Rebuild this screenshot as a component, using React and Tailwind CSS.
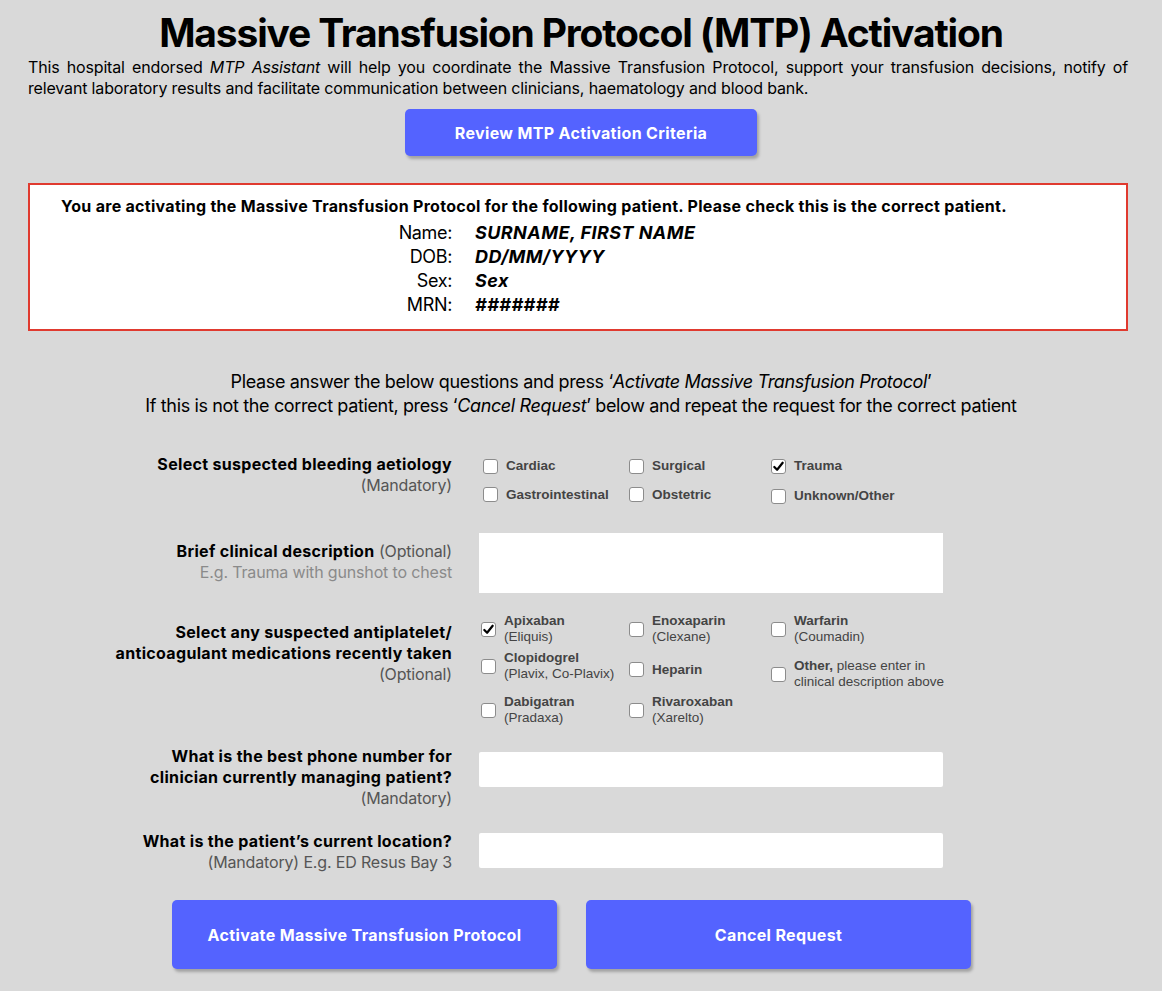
const font = { fontFamily: 'Inter, "Noto Sans", sans-serif' };
const sans = { fontFamily: '"Liberation Sans", Arial, sans-serif' };

function Box({ checked }) {
  return (
    <span className="w-[15px] h-[15px] shrink-0 rounded-[3px] border border-[#8c8c8c] bg-white flex items-center justify-center">
      {checked && (
        <svg viewBox="0 0 14 14" className="w-[13px] h-[13px]">
          <path d="M2.5 7.5 L5.5 10.5 L11.5 3" fill="none" stroke="#000" strokeWidth="2.4" strokeLinecap="round" strokeLinejoin="round" />
        </svg>
      )}
    </span>
  );
}

function Opt({ label, sub, checked }) {
  return (
    <div className="flex items-center gap-2 text-[#444] tracking-normal whitespace-nowrap" style={sans}>
      <Box checked={checked} />
      <div className="leading-[16px]">
        <div className="font-bold text-[13.5px]">{label}</div>
        {sub && <div className="text-[13.5px]">{sub}</div>}
      </div>
    </div>
  );
}

function Label({ children, sub, subClass = 'text-[#555]' }) {
  return (
    <div className="text-right text-[16px] leading-[21px]">
      {children}
      {sub && <div className={subClass}>{sub}</div>}
    </div>
  );
}

const btn = 'rounded-[5px] bg-[#5463ff] text-white font-bold text-[16px] tracking-[0.022em] shadow-[2px_3px_3px_rgba(0,0,0,0.25)]';

export default function App() {
  return (
    <div className="min-h-screen bg-[#d9d9d9] text-black tracking-[-0.01em]" style={font}>
      <div className="pl-[28px] pr-[34px] pt-[10px]">
        <h1 className="text-center text-[39px] leading-[46px] font-bold tracking-[-0.03em] pl-[6px]">Massive Transfusion Protocol (MTP) Activation</h1>
        <p className="text-[16px] leading-[21px] text-justify mt-[1px]">
          This hospital endorsed <i>MTP Assistant</i> will help you coordinate the Massive Transfusion Protocol, support your transfusion decisions, notify of relevant laboratory results and facilitate communication between clinicians, haematology and blood bank.
        </p>
        <div className="flex justify-center mt-[10px] pl-[6px]">
          <button className={`w-[352px] h-[47px] ${btn}`}>Review MTP Activation Criteria</button>
        </div>

        <div className="mt-[27px] bg-white border-2 border-[#e03a2f] pl-[31px] pt-[11px] pb-[12px]">
          <div className="font-bold text-[16px] leading-[21px] tracking-[0.018em]">You are activating the Massive Transfusion Protocol for the following patient. Please check this is the correct patient.</div>
          <div className="grid grid-cols-[391px_1fr] gap-x-[23px] text-[18px] leading-[24px] mt-[4px] tracking-[-0.02em]">
            <div className="text-right">Name:</div><div className="font-bold italic tracking-[0.025em]">SURNAME, FIRST NAME</div>
            <div className="text-right">DOB:</div><div className="font-bold italic tracking-[0.025em]">DD/MM/YYYY</div>
            <div className="text-right">Sex:</div><div className="font-bold italic tracking-[0.025em]">Sex</div>
            <div className="text-right">MRN:</div><div className="font-bold italic tracking-[0.025em]">#######</div>
          </div>
        </div>

        <div className="text-center text-[18px] leading-[24px] mt-[39px] tracking-[-0.02em] pl-[6px]">
          <div>Please answer the below questions and press ‘<i>Activate Massive Transfusion Protocol</i>’</div>
          <div>If this is not the correct patient, press ‘<i>Cancel Request</i>’ below and repeat the request for the correct patient</div>
        </div>
      </div>

      <div className="grid grid-cols-[452px_464px] gap-x-[27px] mt-[36px]">
        <Label sub="(Mandatory)"><b className="tracking-[0.02em]">Select suspected bleeding aetiology</b></Label>
        <div className="grid grid-cols-[146px_142px_1fr] gap-y-[11px] pl-[4px] pt-[4px]">
          <Opt label="Cardiac" />
          <Opt label="Surgical" />
          <Opt label="Trauma" checked />
          <Opt label="Gastrointestinal" />
          <Opt label="Obstetric" />
          <div className="pt-[3px]"><Opt label="Unknown/Other" /></div>
        </div>

        <div className="mt-[37px]">
          <Label sub="E.g. Trauma with gunshot to chest" subClass="text-[#8a8a8a]"><b className="tracking-[0.02em]">Brief clinical description</b> <span className="text-[#555]">(Optional)</span></Label>
        </div>
        <div className="mt-[29px] bg-white h-[60px]" />

        <div className="mt-[29px]">
          <Label sub="(Optional)"><b className="tracking-[0.02em]">Select any suspected antiplatelet/<br />anticoagulant medications recently taken</b></Label>
        </div>
        <div className="grid grid-cols-[148px_142px_1fr] gap-y-[4px] mt-[20px] pl-[2px]">
          <Opt label="Apixaban" sub="(Eliquis)" checked />
          <Opt label="Enoxaparin" sub="(Clexane)" />
          <Opt label="Warfarin" sub="(Coumadin)" />
          <div className="pt-[1px]"><Opt label="Clopidogrel" sub="(Plavix, Co-Plavix)" /></div>
          <div className="flex items-center"><Opt label="Heparin" /></div>
          <div className="mt-[9px] flex items-center gap-2 text-[13.5px] leading-[16px] text-[#444] tracking-normal whitespace-nowrap" style={sans}>
            <Box />
            <div><b>Other,</b> please enter in<br />clinical description above</div>
          </div>
          <Opt label="Dabigatran" sub="(Pradaxa)" />
          <Opt label="Rivaroxaban" sub="(Xarelto)" />
        </div>

        <div className="mt-[20px]">
          <Label sub="(Mandatory)"><b className="tracking-[0.02em]">What is the best phone number for<br />clinician currently managing patient?</b></Label>
        </div>
        <div className="mt-[26px] bg-white h-[35px] rounded-[2px]" />

        <div className="mt-[22px]">
          <Label sub="(Mandatory) E.g. ED Resus Bay 3"><b className="tracking-[0.02em]">What is the patient’s current location?</b></Label>
        </div>
        <div className="mt-[24px] bg-white h-[35px] rounded-[2px]" />
      </div>

      <div className="flex gap-[29px] pl-[172px] mt-[27px] pb-[22px]">
        <button className={`w-[385px] h-[69px] ${btn}`}>Activate Massive Transfusion Protocol</button>
        <button className={`w-[385px] h-[69px] ${btn}`}>Cancel Request</button>
      </div>
    </div>
  );
}
